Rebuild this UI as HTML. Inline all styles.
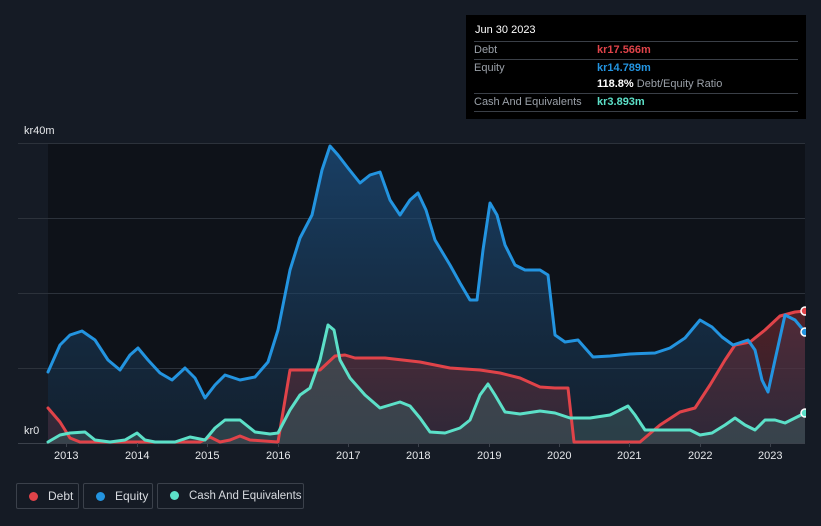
<!DOCTYPE html>
<html><head><meta charset="utf-8"><style>
body{margin:0;width:821px;height:526px;background:#151b25;font-family:"Liberation Sans",sans-serif;overflow:hidden;position:relative}
.tt{position:absolute;left:466px;top:15px;width:340px;height:104px;background:#000;color:#fff;font-size:11px}
.row{position:absolute;left:8px;width:324px;border-top:1px solid #3a3f47;height:17px;line-height:17px}
.lab{color:#9aa0a8}
.leg{position:absolute;top:483px;height:26px;border:1px solid #3b414b;border-radius:2px;color:#d8dbe0;font-size:12px;line-height:25px;box-sizing:border-box;white-space:nowrap}
.dot{display:inline-block;width:9px;height:9px;border-radius:50%;margin:0 10px 0 12px;vertical-align:-1px}
.ax{position:absolute;top:450px;color:#e6e8eb;font-size:11px}
</style></head><body>
<svg width="821" height="526" style="position:absolute;left:0;top:0">
<defs>
<linearGradient id="eq" x1="0" y1="0" x2="0" y2="1"><stop offset="0" stop-color="#1c4e7e" stop-opacity=".75"/><stop offset="1" stop-color="#1b3a57" stop-opacity=".35"/></linearGradient>
<linearGradient id="db" x1="0" y1="0" x2="0" y2="1"><stop offset="0" stop-color="#7a2a30" stop-opacity=".6"/><stop offset="1" stop-color="#4a3040" stop-opacity=".5"/></linearGradient>
</defs>
<rect x="48" y="143" width="757" height="300" fill="#0e1219"/>
<g stroke="#2c323b" stroke-width="1">
<line x1="18" y1="143.5" x2="805" y2="143.5"/><line x1="18" y1="218.5" x2="805" y2="218.5"/><line x1="18" y1="293.5" x2="805" y2="293.5"/><line x1="18" y1="368.5" x2="805" y2="368.5"/><line x1="18" y1="443.5" x2="805" y2="443.5" stroke="#3b414b"/>
</g>
<polygon fill="url(#eq)" points="48,443 48,372 60,345 70,335 82,331 95,340 108,360 120,370 130,355 138,348 148,360 160,373 172,380 185,368 195,378 205,398 215,385 225,375 240,380 255,377 268,362 278,330 290,270 300,238 312,215 322,170 330,146 338,155 348,168 360,183 370,175 380,172 390,200 400,215 410,200 418,193 426,210 435,240 450,265 460,283 470,300 477,300 483,250 490,203 497,215 505,245 515,265 525,270 540,270 548,275 555,335 565,342 578,340 593,357 610,356 630,354 655,353 670,348 685,338 700,320 712,327 722,337 733,345 748,340 755,350 762,380 768,392 775,360 785,315 795,320 805,332 805,443"/>
<polygon fill="url(#db)" points="48,443 48,408 60,422 70,438 80,442 200,442 210,437 220,442 230,440 240,436 250,440 278,442 290,370 300,370 320,370 335,356 345,355 355,358 385,358 420,362 450,368 480,370 500,373 520,378 540,387 555,388 568,388 574,442 640,442 660,425 680,412 695,408 710,385 725,360 735,345 750,342 765,330 780,316 795,312 805,311 805,443"/>
<polygon fill="#3f5a5c" fill-opacity=".55" points="48,443 48,442 60,435 70,433 85,432 95,440 110,442 125,440 137,433 145,440 155,442 175,442 190,437 205,440 215,428 225,420 240,420 255,432 270,434 278,433 290,410 300,395 310,388 320,360 328,325 334,330 340,360 350,378 365,395 380,408 390,405 400,402 410,406 420,418 430,432 445,433 460,428 470,420 480,395 488,384 495,395 505,412 520,414 540,411 555,413 570,418 590,418 610,415 628,406 635,415 645,430 665,430 690,430 700,435 712,433 725,425 735,418 745,425 755,430 765,420 775,420 785,423 805,413 805,443"/>
<g fill="none" stroke-width="3" stroke-linejoin="round" stroke-linecap="round">
<polyline stroke="#e04349" points="48,408 60,422 70,438 80,442 200,442 210,437 220,442 230,440 240,436 250,440 278,442 290,370 300,370 320,370 335,356 345,355 355,358 385,358 420,362 450,368 480,370 500,373 520,378 540,387 555,388 568,388 574,442 640,442 660,425 680,412 695,408 710,385 725,360 735,345 750,342 765,330 780,316 795,312 805,311"/>
<polyline stroke="#2394e0" points="48,372 60,345 70,335 82,331 95,340 108,360 120,370 130,355 138,348 148,360 160,373 172,380 185,368 195,378 205,398 215,385 225,375 240,380 255,377 268,362 278,330 290,270 300,238 312,215 322,170 330,146 338,155 348,168 360,183 370,175 380,172 390,200 400,215 410,200 418,193 426,210 435,240 450,265 460,283 470,300 477,300 483,250 490,203 497,215 505,245 515,265 525,270 540,270 548,275 555,335 565,342 578,340 593,357 610,356 630,354 655,353 670,348 685,338 700,320 712,327 722,337 733,345 748,340 755,350 762,380 768,392 775,360 785,315 795,320 805,332"/>
<polyline stroke="#5ce0c8" points="48,442 60,435 70,433 85,432 95,440 110,442 125,440 137,433 145,440 155,442 175,442 190,437 205,440 215,428 225,420 240,420 255,432 270,434 278,433 290,410 300,395 310,388 320,360 328,325 334,330 340,360 350,378 365,395 380,408 390,405 400,402 410,406 420,418 430,432 445,433 460,428 470,420 480,395 488,384 495,395 505,412 520,414 540,411 555,413 570,418 590,418 610,415 628,406 635,415 645,430 665,430 690,430 700,435 712,433 725,425 735,418 745,425 755,430 765,420 775,420 785,423 805,413"/>
</g>
<circle cx="805" cy="311" r="4" fill="#e04349" stroke="#fff" stroke-width="1.5"/>
<circle cx="805" cy="332" r="4" fill="#2394e0" stroke="#fff" stroke-width="1.5"/>
<circle cx="805" cy="413" r="4" fill="#5ce0c8" stroke="#fff" stroke-width="1.5"/>
<rect x="806" y="140" width="15" height="310" fill="#151b25"/>
<g stroke="#3b414b"><line x1="66.5" y1="443" x2="66.5" y2="447"/><line x1="137.5" y1="443" x2="137.5" y2="447"/><line x1="207.5" y1="443" x2="207.5" y2="447"/><line x1="278.5" y1="443" x2="278.5" y2="447"/><line x1="348.5" y1="443" x2="348.5" y2="447"/><line x1="418.5" y1="443" x2="418.5" y2="447"/><line x1="489.5" y1="443" x2="489.5" y2="447"/><line x1="559.5" y1="443" x2="559.5" y2="447"/><line x1="629.5" y1="443" x2="629.5" y2="447"/><line x1="700.5" y1="443" x2="700.5" y2="447"/><line x1="770.5" y1="443" x2="770.5" y2="447"/></g>
</svg>
<div style="position:absolute;left:24px;top:125px;color:#e6e8eb;font-size:11px">kr40m</div>
<div style="position:absolute;left:24px;top:425px;color:#e6e8eb;font-size:11px">kr0</div>
<div class="ax" style="left:54px">2013</div><div class="ax" style="left:125px">2014</div><div class="ax" style="left:195px">2015</div><div class="ax" style="left:266px">2016</div><div class="ax" style="left:336px">2017</div><div class="ax" style="left:406px">2018</div><div class="ax" style="left:477px">2019</div><div class="ax" style="left:547px">2020</div><div class="ax" style="left:617px">2021</div><div class="ax" style="left:688px">2022</div><div class="ax" style="left:758px">2023</div>
<div class="tt">
<div style="position:absolute;left:9px;top:9px">Jun 30 2023</div>
<div class="row" style="top:26px"><span class="lab">Debt</span><span style="position:absolute;left:123px;color:#e04349;font-weight:bold">kr17.566m</span></div>
<div class="row" style="top:44px"><span class="lab">Equity</span><span style="position:absolute;left:123px;color:#2394e0;font-weight:bold">kr14.789m</span></div>
<div class="row" style="top:61px;border:none"><span style="position:absolute;left:123px"><b>118.8%</b> <span class="lab">Debt/Equity Ratio</span></span></div>
<div class="row" style="top:78px;border-bottom:1px solid #3a3f47"><span class="lab">Cash And Equivalents</span><span style="position:absolute;left:123px;color:#5ce0c8;font-weight:bold">kr3.893m</span></div>
</div>
<div class="leg" style="left:16px;width:63px"><span class="dot" style="background:#e04349"></span>Debt</div>
<div class="leg" style="left:83px;width:70px"><span class="dot" style="background:#2394e0"></span>Equity</div>
<div class="leg" style="left:157px;width:147px;font-size:11.5px"><span class="dot" style="background:#5ce0c8"></span>Cash And Equivalents</div>
</body></html>
